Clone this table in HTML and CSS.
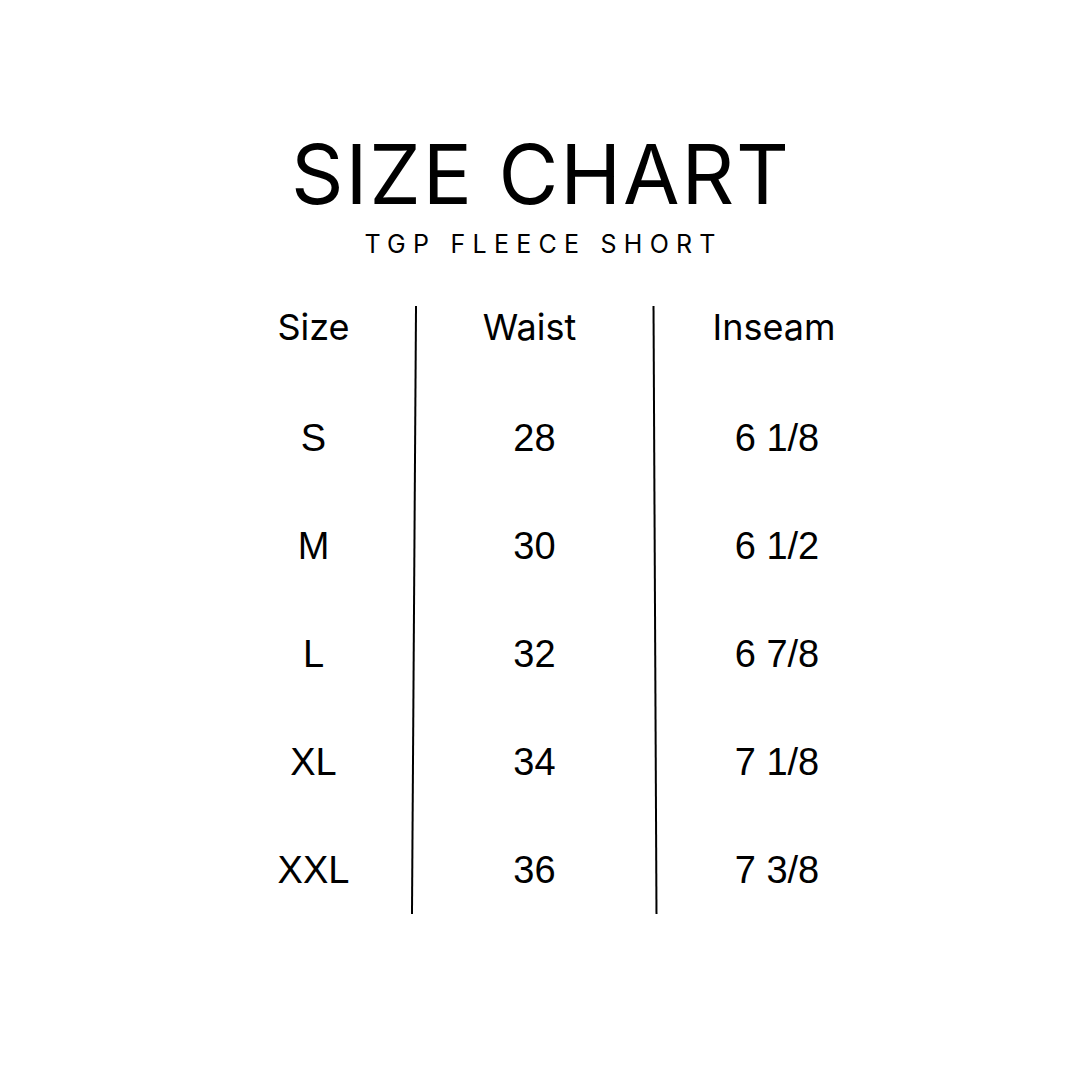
FILE: index.html
```html
<!DOCTYPE html>
<html lang="en">
<head>
<meta charset="utf-8">
<title>Size Chart</title>
<link rel="stylesheet" href="styles.css">
</head>
<body>
<main class="page">
  <header class="heading">
    <h1 class="title">SIZE CHART</h1>
    <p class="subtitle">TGP FLEECE SHORT</p>
  </header>
  <section class="chart">
    <div class="col col-size">
      <div class="head">Size</div>
      <div class="cell">S</div>
      <div class="cell">M</div>
      <div class="cell">L</div>
      <div class="cell">XL</div>
      <div class="cell">XXL</div>
    </div>
    <div class="divider divider-left"></div>
    <div class="col col-waist">
      <div class="head">Waist</div>
      <div class="cell">28</div>
      <div class="cell">30</div>
      <div class="cell">32</div>
      <div class="cell">34</div>
      <div class="cell">36</div>
    </div>
    <div class="divider divider-right"></div>
    <div class="col col-inseam">
      <div class="head">Inseam</div>
      <div class="cell">6 1/8</div>
      <div class="cell">6 1/2</div>
      <div class="cell">6 7/8</div>
      <div class="cell">7 1/8</div>
      <div class="cell">7 3/8</div>
    </div>
  </section>
</main>
</body>
</html>
```

FILE: styles.css
```css
html, body {
  margin: 0;
  padding: 0;
  background: #ffffff;
}

.page {
  width: 1080px;
  height: 1080px;
  display: flex;
  flex-direction: column;
  align-items: center;
  color: #000;
  font-family: "Inter", "Liberation Sans", sans-serif;
}

.heading {
  display: flex;
  flex-direction: column;
  align-items: center;
  padding-top: 130px;
}

.title {
  margin: 0;
  font-size: 82px;
  font-weight: 400;
  line-height: 90px;
  letter-spacing: 0.022em;
  padding-left: 0.022em;
}

.subtitle {
  margin: 9px 0 0;
  font-size: 25px;
  font-weight: 400;
  line-height: 30px;
  letter-spacing: 0.29em;
  padding-left: 0.29em;
}

.chart {
  display: flex;
  margin-top: 47px;
  width: 684px;
  margin-left: 32px;
}

.col {
  display: flex;
  flex-direction: column;
  align-items: center;
}

.col-size { width: 199px; }
.col-waist { width: 239px; }
.col-inseam { width: 242px; }

.head {
  font-family: "Inter", "Liberation Sans", sans-serif;
  font-size: 36px;
  line-height: 42px;
  height: 78px;
}

.cell {
  font-family: "Liberation Sans", Arial, sans-serif;
  font-size: 38px;
  line-height: 108px;
  height: 108px;
}

.col-waist .head { margin-right: 10px; }
.col-inseam .head { margin-right: 6px; }

.divider {
  width: 2px;
  background: #000;
  margin-bottom: 10px;
}

.divider-left { transform: rotate(0.38deg); }
.divider-right { transform: rotate(-0.28deg); }
```
